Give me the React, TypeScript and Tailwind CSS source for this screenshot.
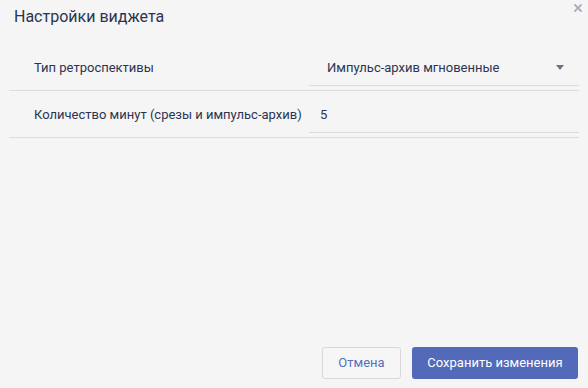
import { useState } from 'react';

const rows = [
  { label: 'Тип ретроспективы', kind: 'select', value: 'Импульс-архив мгновенные' },
  { label: 'Количество минут (срезы и импульс-архив)', kind: 'input', value: '5' },
];

export default function App() {
  const [values] = useState(rows);

  return (
    <div
      className="flex h-[388px] w-[588px] flex-col bg-[#f5f5f5] text-[#2b3452]"
      style={{ fontFamily: 'Roboto, "Noto Sans", sans-serif' }}
    >
      {/* Header */}
      <div className="relative h-[44px] shrink-0">
        <h1 className="pl-[14px] pt-[6px] text-[16px] leading-[22px] text-[#2b3452]">Настройки виджета</h1>
        <button className="absolute right-[6px] top-[4px] p-0 text-[#a8acb7]" aria-label="Закрыть">
          <svg width="8" height="8" viewBox="0 0 8 8">
            <path d="M1 1L7 7M7 1L1 7" stroke="currentColor" strokeWidth="1.8" strokeLinecap="square" />
          </svg>
        </button>
      </div>

      {/* Form rows */}
      <div className="mx-[9px] flex flex-col">
        {values.map((row) => (
          <div key={row.label} className="flex h-[47px] border-b border-[#dcdcdc]">
            <div className="flex w-[300px] shrink-0 items-center pl-[25px] pt-[2px] text-[13px]">
              {row.label}
            </div>
            {row.kind === 'select' ? (
              <div className="mb-[4px] flex h-[36px] flex-1 items-center self-end border-b border-[#dcdcdc] pl-[18px] pr-[15px] text-[13px]">
                <span className="flex-1">{row.value}</span>
                <svg width="8" height="5" viewBox="0 0 8 5">
                  <path d="M0 0H8L4 5Z" fill="#6c7186" />
                </svg>
              </div>
            ) : (
              <div className="mb-[4px] flex h-[36px] flex-1 items-center self-end border-b border-[#dcdcdc] pl-[11px] text-[13px]">
                {row.value}
              </div>
            )}
          </div>
        ))}
      </div>

      <div className="flex-1" />

      {/* Footer */}
      <div className="flex justify-end gap-[11px] pb-[9px] pr-[10px]">
        <button className="h-[32px] w-[79px] rounded-[3px] border border-[#d8d8d8] bg-[#f6f6f6] text-[13px] text-[#5a6fbf]">
          Отмена
        </button>
        <button className="h-[32px] w-[166px] rounded-[3px] bg-[#5369b9] text-[13px] text-white">
          Сохранить изменения
        </button>
      </div>
    </div>
  );
}
